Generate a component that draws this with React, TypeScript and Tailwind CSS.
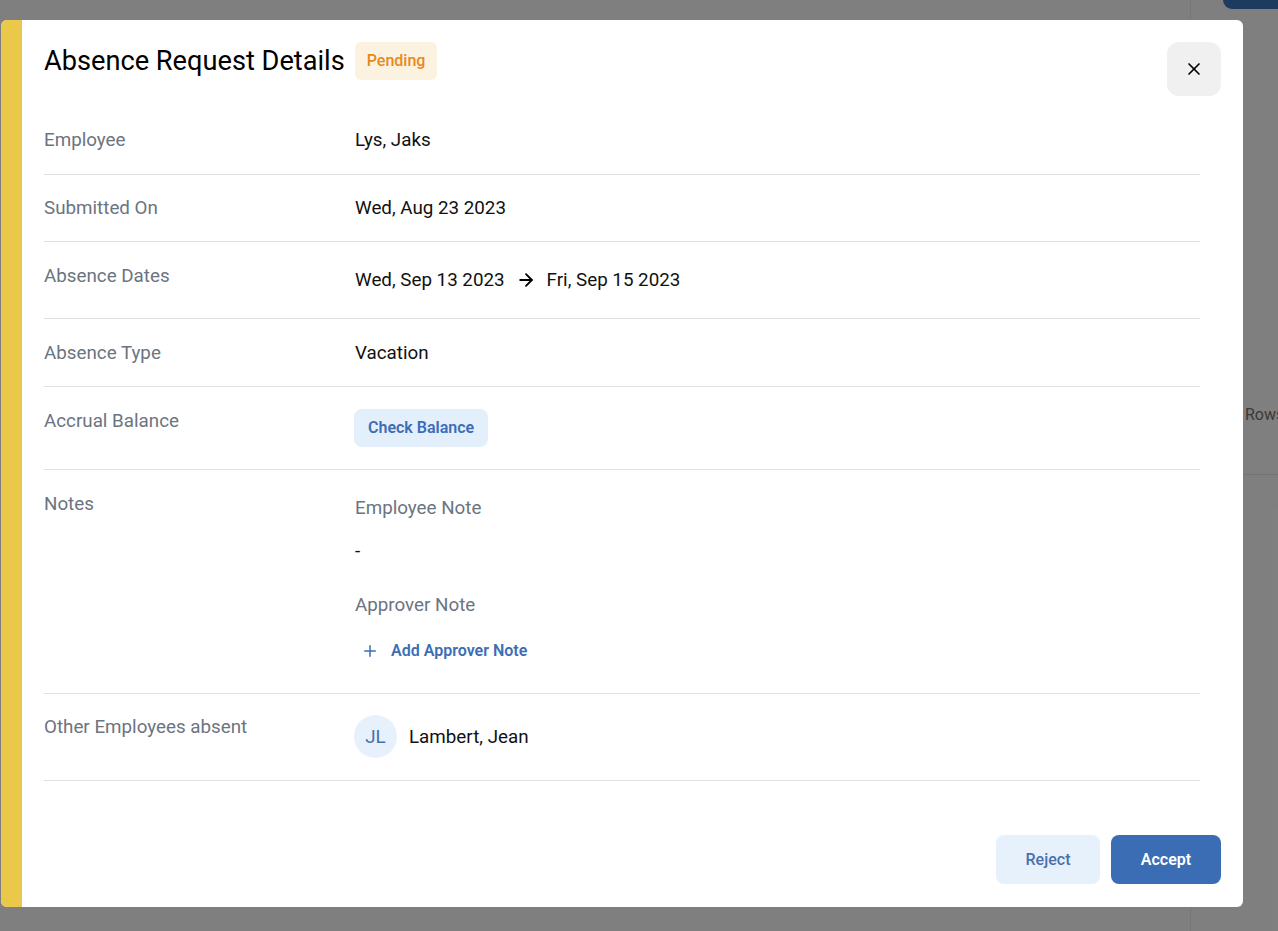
import { ArrowRight, Plus, X } from 'lucide-react';

const font = { fontFamily: 'Roboto, "Liberation Sans", sans-serif' };

function Row({ label, children, className = 'py-[21px]', labelClass = '' }: { label: string; children: React.ReactNode; className?: string; labelClass?: string }) {
    return (
        <div className={`flex border-b border-[#e0e0e0] ${className}`}>
            <div className={`w-[311px] shrink-0 text-[18.8px] leading-[24px] text-[#6b7480] ${labelClass}`}>{label}</div>
            <div className="flex-1 text-[18.8px] leading-[24px] text-[#111]">{children}</div>
        </div>
    );
}

export default function App() {
    return (
        <div className="relative h-[931px] w-[1278px] overflow-hidden bg-white" style={font}>
            {/* Page behind the dialog */}
            <div className="flex h-full">
                <div className="w-[1190px] shrink-0" />
                <div className="flex-1 border-l border-[#ececec]">
                    <div className="ml-[32px] h-[9px] rounded-bl-[10px] bg-[#3a74be]" />
                    <div className="ml-[54px] mt-[396px] text-[16px] leading-[20px] text-[#757575]">Rows</div>
                    <div className="mt-[49px] border-b border-[#e6e6e6]" />
                </div>
            </div>

            {/* Overlay */}
            <div className="absolute inset-0 bg-black/50 pl-[1px] pt-[20px]">
                <div className="relative flex h-[887px] w-[1242px] overflow-hidden rounded-[6px] bg-white">
                    <div className="w-[21px] shrink-0 bg-[#eac84a]" />

                    <div className="flex flex-1 flex-col pl-[22px]">
                        {/* Header */}
                        <div className="flex items-start pt-[22px] pr-[22px]">
                            <div className="flex flex-1 items-center gap-[10px]">
                                <h1 className="text-[27.2px] leading-[32px] font-normal text-black">Absence Request Details</h1>
                                <span className="flex h-[38px] items-center rounded-[6px] bg-[#fbf3df] px-[12px] text-[16px] font-medium text-[#e8891c]">
                                    Pending
                                </span>
                            </div>
                            <button className="flex h-[54px] w-[54px] items-center justify-center rounded-[12px] bg-[#f0f0f0]">
                                <X className="h-[20px] w-[20px] text-black" strokeWidth={2} />
                            </button>
                        </div>

                        {/* Details */}
                        <div className="mt-[11px] mr-[43px]">
                            <Row label="Employee" className="pt-[21px] pb-[22px]">Lys, Jaks</Row>
                            <Row label="Submitted On">Wed, Aug 23 2023</Row>
                            <Row label="Absence Dates" labelClass="pt-[1px]">
                                <div className="flex h-[34px] items-center">
                                    <span>Wed, Sep 13 2023</span>
                                    <ArrowRight className="mx-[11px] h-[20px] w-[20px] text-black" strokeWidth={2.2} />
                                    <span>Fri, Sep 15 2023</span>
                                </div>
                            </Row>
                            <Row label="Absence Type" className="pt-[22px] pb-[21px]">Vacation</Row>
                            <Row label="Accrual Balance" className="pt-[22px] pb-[22px]">
                                <button className="-ml-[1px] flex h-[38px] items-center rounded-[8px] bg-[#e3f0fc] px-[14px] text-[16px] font-semibold text-[#3d6db5]">
                                    Check Balance
                                </button>
                            </Row>
                            <Row label="Notes" className="pt-[22px] pb-[22px]">
                                <div className="flex flex-col pt-[4px]">
                                    <div className="text-[#6b7480]">Employee Note</div>
                                    <div className="mt-[19px]">-</div>
                                    <div className="mt-[30px] text-[#6b7480]">Approver Note</div>
                                    <button className="mt-[14px] flex h-[40px] items-center gap-[12px] self-start pl-[6px] text-[16px] font-semibold text-[#3d6db5]">
                                        <Plus className="h-[18px] w-[18px]" strokeWidth={2} />
                                        Add Approver Note
                                    </button>
                                </div>
                            </Row>
                            <Row label="Other Employees absent" className="pt-[21px] pb-[22px]">
                                <div className="flex items-center gap-[12px]">
                                    <div className="-ml-[1px] flex h-[43px] w-[43px] items-center justify-center rounded-full bg-[#e6f1fc] text-[18.8px] text-[#4a6fb0]">
                                        JL
                                    </div>
                                    <span>Lambert, Jean</span>
                                </div>
                            </Row>
                        </div>

                        {/* Footer */}
                        <div className="mt-auto flex justify-end gap-[11px] pb-[23px] pr-[22px]">
                            <button className="h-[49px] w-[104px] rounded-[8px] bg-[#e6f1fc] text-[16px] font-medium text-[#4a6fb0]">
                                Reject
                            </button>
                            <button className="h-[49px] w-[110px] rounded-[8px] bg-[#3b6db5] text-[16px] font-semibold text-white">
                                Accept
                            </button>
                        </div>
                    </div>
                </div>
            </div>
        </div>
    );
}
